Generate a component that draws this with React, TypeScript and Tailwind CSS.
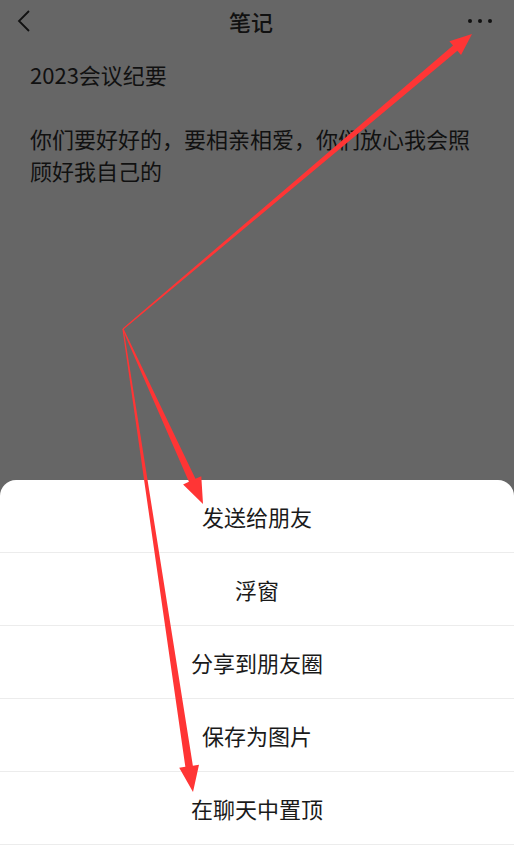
import React from "react";

type Pt = [number, number];

// tapered annotation arrow: thin at the start, thick near the head
const arrowPoints = (from: Pt, to: Pt, headLen: number, headHalf: number, tail: number, neck: number) => {
    const dx = to[0] - from[0];
    const dy = to[1] - from[1];
    const len = Math.hypot(dx, dy);
    const ux = dx / len;
    const uy = dy / len;
    const nx = -uy;
    const ny = ux;
    const bx = to[0] - ux * headLen;
    const by = to[1] - uy * headLen;
    const pts: Pt[] = [
        [from[0] + nx * tail, from[1] + ny * tail],
        [bx + nx * neck, by + ny * neck],
        [bx + nx * headHalf, by + ny * headHalf],
        to,
        [bx - nx * headHalf, by - ny * headHalf],
        [bx - nx * neck, by - ny * neck],
        [from[0] - nx * tail, from[1] - ny * tail],
    ];
    return pts.map((p) => p.join(",")).join(" ");
};

const origin: Pt = [123, 329];

const menuItems = ["发送给朋友", "浮窗", "分享到朋友圈", "保存为图片", "在聊天中置顶"];

const App = () => {
    return (
        <div
            className="relative w-[514px] h-[848px] bg-[#666666] flex flex-col overflow-hidden"
            style={{ fontFamily: '"Noto Sans CJK SC", "Noto Sans", sans-serif' }}
        >
            <div className="h-[42px] flex items-center justify-between px-[14px] shrink-0">
                <svg width="20" height="24" viewBox="0 0 20 24">
                    <path d="M15 2 L5 12 L15 22" fill="none" stroke="#111111" strokeWidth="1.8" />
                </svg>
                <h1 className="text-[22px] font-medium text-[#111111] leading-none">笔记</h1>
                <div className="flex items-center gap-[6px] pr-[8px]">
                    <span className="w-[4px] h-[4px] rounded-full bg-[#111111]" />
                    <span className="w-[4px] h-[4px] rounded-full bg-[#111111]" />
                    <span className="w-[4px] h-[4px] rounded-full bg-[#111111]" />
                </div>
            </div>

            <div className="px-[30px] pt-[16px] text-[22px] leading-[32px] text-[#111111]">
                <p>2023会议纪要</p>
                <p>&nbsp;</p>
                <p>你们要好好的，要相亲相爱，你们放心我会照顾好我自己的</p>
            </div>

            <div className="mt-auto bg-white rounded-t-[16px] pb-[3px]">
                {menuItems.map((item) => (
                    <div
                        key={item}
                        className="h-[73px] flex items-center justify-center border-b border-[#ececec] text-[22px] text-[#1a1a1a]"
                    >
                        {item}
                    </div>
                ))}
            </div>

            <svg className="absolute inset-0 pointer-events-none" width="514" height="848" viewBox="0 0 514 848">
                <polygon points={arrowPoints(origin, [472, 34], 22, 9, 0.6, 3.4)} fill="#ff3535" />
                <polygon points={arrowPoints(origin, [203, 504], 26, 10, 0.6, 3.6)} fill="#ff3535" />
                <polygon points={arrowPoints(origin, [193, 792], 26, 10, 0.6, 3.8)} fill="#ff3535" />
            </svg>
        </div>
    );
};

export default App;
